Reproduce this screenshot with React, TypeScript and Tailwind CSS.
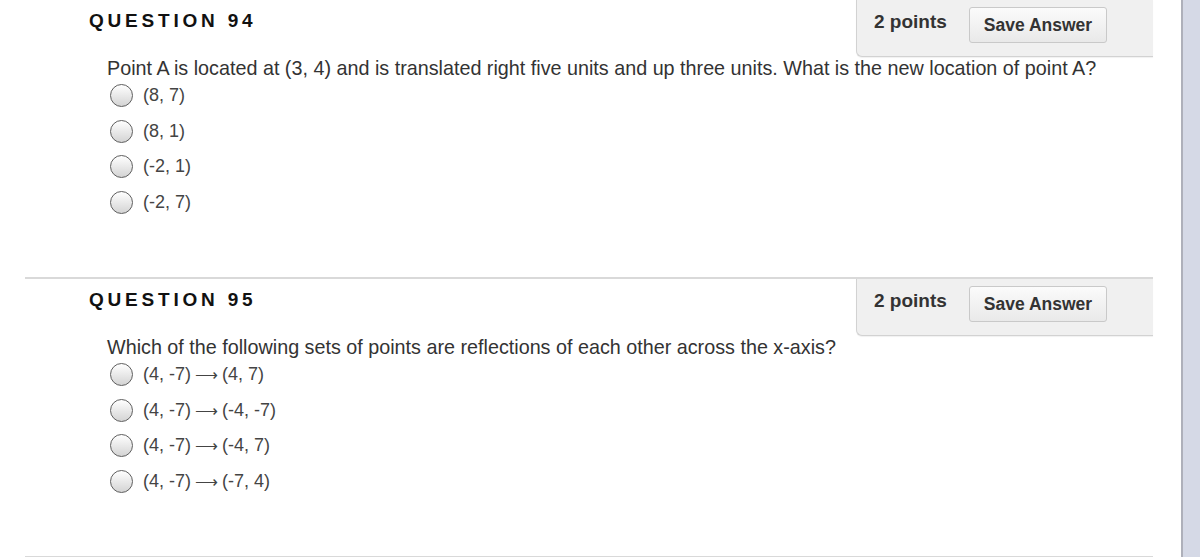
const questions = [
  {
    n: 94,
    text: "Point A is located at (3, 4) and is translated right five units and up three units. What is the new location of point A?",
    options: [["(8, 7)"], ["(8, 1)"], ["(-2, 1)"], ["(-2, 7)"]],
  },
  {
    n: 95,
    text: "Which of the following sets of points are reflections of each other across the x-axis?",
    options: [
      ["(4, -7)", "(4, 7)"],
      ["(4, -7)", "(-4, -7)"],
      ["(4, -7)", "(-4, 7)"],
      ["(4, -7)", "(-7, 4)"],
    ],
  },
];

function Radio() {
  return (
    <span className="block w-[23px] h-[23px] rounded-full border-[1.5px] border-[#5e5e5e] bg-gradient-to-b from-[#ffffff] to-[#d4d4d4]" />
  );
}

function Question({ q }: { q: (typeof questions)[number] }) {
  return (
    <section className="ml-[25px] w-[1128px] h-[279px] border-t-2 border-[#d9d9d9]">
      {/* Header */}
      <div className="flex justify-between">
        <h2 className="pl-[64px] pt-[9px] text-[19px] font-bold tracking-[0.2em] text-[#111] leading-[24px]">
          QUESTION {q.n}
        </h2>
        <div className="w-[297px] h-[57px] bg-[#f0f0f0] border-l border-b border-[#d2d2d2] rounded-bl-md shadow-[0_1px_1px_rgba(0,0,0,0.06)] flex items-start pl-[17px] pt-[7px]">
          <span className="text-[19px] font-bold text-[#333] leading-[30px] w-[95px]">2 points</span>
          <button className="w-[138px] h-[36px] bg-gradient-to-b from-[#fbfbfb] to-[#e9e9e9] border border-[#c9c9c9] rounded-[3px] text-[17.5px] font-bold text-[#333]">
            Save Answer
          </button>
        </div>
      </div>

      {/* Body */}
      <div className="pl-[82px]">
        <p className="text-[19.75px] text-[#333] leading-[24px] -mt-[1px]">{q.text}</p>
        <ul className="-mt-[2px]">
          {q.options.map((o) => (
            <li key={o.join()} className="flex items-center h-[35.5px] pl-[3px] gap-[10px] text-[18px] text-[#444]">
              <Radio />
              <span>
                {o[0]}
                {o[1] && (
                  <>
                    <span
                      style={{ fontFamily: '"DejaVu Sans", sans-serif' }}
                      className="inline-block mx-[4px] text-[16px] leading-none font-light"
                    >
                      {"\u27f6"}
                    </span>
                    {o[1]}
                  </>
                )}
              </span>
            </li>
          ))}
        </ul>
      </div>
    </section>
  );
}

export default function App() {
  return (
    <div className="flex w-[1200px] h-[557px] overflow-hidden bg-white" style={{ fontFamily: '"Liberation Sans", Arial, sans-serif' }}>
      <main className="flex-1 -mt-[2px]">
        {questions.map((q) => (
          <Question key={q.n} q={q} />
        ))}
        <div className="ml-[25px] w-[1128px] border-t-2 border-[#d9d9d9]" />
      </main>
      <aside className="w-[19px] border-l-2 border-[#aeb0ba] bg-[#d5d9e6]" />
    </div>
  );
}
